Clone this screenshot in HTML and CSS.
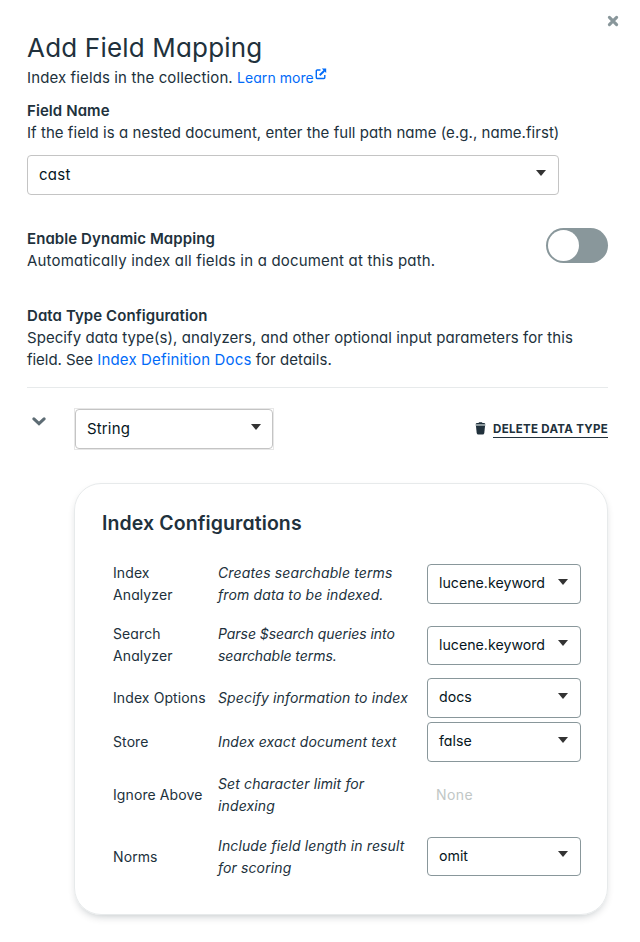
FILE: index.html
```html
<!DOCTYPE html>
<html lang="en">
<head>
<meta charset="utf-8">
<title>Add Field Mapping</title>
<link rel="stylesheet" href="styles.css">
</head>
<body>
<main class="dialog">
  <header class="dialog-top">
    <svg class="close" viewBox="0 0 12 12"><path d="M2.4 2.4 9.6 9.6M9.6 2.4 2.4 9.6"/></svg>
  </header>
  <h1 class="title">Add Field Mapping</h1>
  <p class="text intro"><span class="lead">Index fields in the collection.</span> <a class="link more">Learn more</a><svg class="external" viewBox="0 0 12 12"><path class="frame" d="M5.5 2H2.2Q1.3 2 1.3 2.9V9.6Q1.3 10.5 2.2 10.5H8.9Q9.8 10.5 9.8 9.6V7"/><path class="shaft" d="M4.7 7.2 9.3 2.7"/><path class="tip" d="M6.8 .6H11.2V5Z"/></svg></p>

  <section class="field-name">
    <h2 class="label">Field Name</h2>
    <p class="text">If the field is a nested document, enter the full path name (e.g., name.first)</p>
    <div class="select select-wide"><span>cast</span><i class="caret"></i></div>
  </section>

  <section class="dynamic">
    <div>
      <h2 class="label">Enable Dynamic Mapping</h2>
      <p class="text">Automatically index all fields in a document at this path.</p>
    </div>
    <div class="toggle"><span class="knob"></span></div>
  </section>

  <section class="types">
    <h2 class="label">Data Type Configuration</h2>
    <p class="text">Specify data type(s), analyzers, and other optional input parameters for this<br><span class="see">field. See</span> <a class="link docs">Index Definition Docs</a> for details.</p>
  </section>

  <section class="type-row">
    <svg class="chevron" viewBox="0 0 14 9"><path d="M1.9 1.9 7 6.7 12.1 1.9"/></svg>
    <div class="select-frame"><div class="select select-type"><span>String</span><i class="caret"></i></div></div>
    <div class="delete">
      <svg class="trash" viewBox="0 0 10 13"><path d="M.2 2.2Q.2 1.2 1.3 1H3L3.6.3H6.4L7 1H8.7Q9.8 1.2 9.8 2.2Z"/><path d="M.4 3.6H9.6L8.8 11Q8.5 12.5 7.1 12.5H2.9Q1.5 12.5 1.2 11Z"/><path class="lid" d="M.2 2.1H9.8V3.8H.2Z"/></svg>
      <span class="delete-text">DELETE DATA TYPE</span>
    </div>
  </section>

  <section class="card">
    <h2 class="card-title">Index Configurations</h2>
    <div class="options">
      <div class="name">Index<br>Analyzer</div><div class="desc">Creates searchable terms<br>from data to be indexed.</div><div class="select"><span>lucene.keyword</span><i class="caret"></i></div>
      <div class="name raised">Search<br>Analyzer</div><div class="desc tight raised">Parse $search queries into<br>searchable terms.</div><div class="select short"><span>lucene.keyword</span><i class="caret"></i></div>
      <div class="name">Index Options</div><div class="desc">Specify information to index</div><div class="select"><span>docs</span><i class="caret"></i></div>
      <div class="name">Store</div><div class="desc">Index exact document text</div><div class="select"><span>false</span><i class="caret"></i></div>
      <div class="name">Ignore Above</div><div class="desc">Set character limit for<br>indexing</div><div class="none">None</div>
      <div class="name">Norms</div><div class="desc">Include field length in result<br>for scoring</div><div class="select short"><span>omit</span><i class="caret"></i></div>
    </div>
  </section>
</main>
</body>
</html>
```
FILE: styles.css
```css
* { box-sizing: border-box; }
body {
  margin: 0;
  background: #fff;
  color: #21313c;
  font-family: Inter, "Liberation Sans", sans-serif;
  font-feature-settings: "cv11";
  font-size: 15px;
  line-height: 22px;
}
h1, h2, p { margin: 0; }
.dialog { padding: 15px 32px 0 27px; height: 942px; overflow: hidden; }
.dialog-top { display: flex; justify-content: flex-end; height: 17px; margin-right: -11px; }
.close { width: 12px; height: 12px; fill: none; stroke: #89979b; stroke-width: 3.1; stroke-linecap: round; }
.title { font-size: 26px; font-weight: 400; line-height: 32px; height: 35px; white-space: nowrap; letter-spacing: .19px; }
.text { white-space: nowrap; letter-spacing: .045px; }
.types .text { letter-spacing: .06px; }
.lead { letter-spacing: .12px; }
.dynamic .text { letter-spacing: .185px; }
.link { color: #016bf8; }
.intro { height: 22px; }
.more { font-size: 14px; letter-spacing: .04px; }
.see { letter-spacing: -.04px; }
.docs { letter-spacing: .15px; }
.external { width: 12px; height: 12px; margin-left: 1px; vertical-align: 3px; }
.external path { fill: none; stroke: #016bf8; stroke-width: 1.4; }
.external .shaft { stroke-width: 1.9; }
.external .tip { fill: #016bf8; stroke: none; }
.label { font-size: 15px; font-weight: 600; line-height: 22px; letter-spacing: .08px; }
.field-name { margin-top: 11px; }
.select {
  display: flex;
  align-items: center;
  justify-content: space-between;
  height: 40px;
  padding: 0 12px 2px 11px;
  border: 1px solid #89979b;
  border-radius: 4px;
  background: #fff;
  color: #061621;
}
.caret { border: solid transparent; border-width: 6px 5px 0; border-top-color: #333; margin-top: -3px; }
.select-wide { width: 532px; margin-top: 11px; padding-bottom: 0; border-color: #c4c4c4; letter-spacing: .25px; }
.select-wide .caret, .select-type .caret, .short .caret { margin-top: -4px; }
.dynamic { display: flex; justify-content: space-between; margin-top: 33px; }
.toggle { width: 62px; height: 35px; border-radius: 18px; background: #89979b; padding: 2px; }
.knob { display: block; width: 31px; height: 31px; border-radius: 50%; background: #fff; }
.types { margin-top: 33px; padding-bottom: 16px; border-bottom: 1px solid #e7eaeb; }
.type-row { display: flex; margin-top: 20px; }
.chevron { width: 14px; height: 9px; margin: 9px 29px 0 5px; fill: none; stroke: #5d6c74; stroke-width: 3; stroke-linecap: round; }
.select-frame { border: 1px solid #e7e7e7; margin-left: -1px; }
.select-type { width: 198px; padding: 0 11px 0 11px; border-color: #c4c4c4; letter-spacing: .15px; }
.delete { display: flex; margin: 13px 0 0 auto; align-items: flex-start; }
.trash { width: 11px; height: 13px; margin: 1px 7px 0 0; fill: #21313c; }
.trash .lid { fill: #89979b; }
.delete-text { font-size: 11.5px; font-weight: 700; line-height: 16px; height: 17px; border-bottom: 1px solid #21313c; letter-spacing: .3px; white-space: nowrap; }
.card {
  height: 432px;
  margin: 33px 0 0 47px;
  padding: 26px 26px 0 27px;
  border: 1px solid #e7eaeb;
  border-radius: 27px;
  box-shadow: 0 4px 10px -4px rgba(6, 22, 33, .3);
}
.card-title { font-size: 19.5px; font-weight: 600; line-height: 26px; white-space: nowrap; letter-spacing: .1px; }
.options {
  display: grid;
  grid-template-columns: 105px 209px 154px;
  grid-template-rows: 62px 61px 44px 44px 62px 61px;
  align-items: center;
  margin: 17px 0 0 11px;
  font-size: 14px;
  white-space: nowrap;
}
.options .select { font-size: 14.2px; }
.options .short { height: 39px; padding-bottom: 1px; }
.name { letter-spacing: .1px; }
.desc { font-style: italic; letter-spacing: .13px; }
.tight { letter-spacing: -.05px; }
.raised { padding-bottom: 1px; }
.none { padding-left: 9px; color: #c1c7c6; letter-spacing: .4px; }
```
